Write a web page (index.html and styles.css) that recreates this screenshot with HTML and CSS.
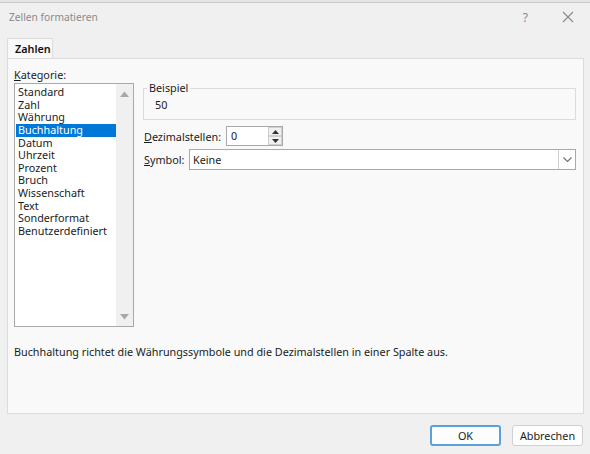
FILE: index.html
```html
<!DOCTYPE html>
<html lang="de">
<head>
<meta charset="utf-8">
<title>Zellen formatieren</title>
<link rel="stylesheet" href="styles.css">
</head>
<body>
<div class="window">
  <div class="strip"></div>
  <div class="titlebar">
    <span class="title">Zellen formatieren</span>
    <span class="help">?</span>
    <svg class="close" width="12" height="12" viewBox="0 0 12 12"><path d="M1 1L11 11M11 1L1 11" stroke="#8a8a8a" stroke-width="1.1" fill="none"/></svg>
  </div>
  <div class="tabs">
    <div class="tab">Zahlen</div>
  </div>
  <div class="panel">
    <div class="main">
      <div class="left">
        <div class="label"><u>K</u>ategorie:</div>
        <div class="listbox">
          <ul class="items">
            <li>Standard</li>
            <li>Zahl</li>
            <li>Währung</li>
            <li class="selected">Buchhaltung</li>
            <li>Datum</li>
            <li>Uhrzeit</li>
            <li>Prozent</li>
            <li>Bruch</li>
            <li>Wissenschaft</li>
            <li>Text</li>
            <li>Sonderformat</li>
            <li>Benutzerdefiniert</li>
          </ul>
          <div class="scrollbar">
            <svg width="9" height="6" viewBox="0 0 9 6"><path d="M0 6L4.5 0.5L9 6Z" fill="#a8a8a8"/></svg>
            <svg width="9" height="6" viewBox="0 0 9 6"><path d="M0 0L4.5 5.5L9 0Z" fill="#a8a8a8"/></svg>
          </div>
        </div>
      </div>
      <div class="right">
        <fieldset class="sample">
          <legend>Beispiel</legend>
          <div class="sample-value">50</div>
        </fieldset>
        <div class="row decimals">
          <span class="field-label"><u>D</u>ezimalstellen:</span>
          <div class="spinner">
            <span class="spin-value">0</span>
            <div class="spin-buttons">
              <div class="spin-btn"><svg width="7" height="4" viewBox="0 0 7 4"><path d="M0 4L3.5 0L7 4Z" fill="#333"/></svg></div>
              <div class="spin-btn"><svg width="7" height="4" viewBox="0 0 7 4"><path d="M0 0L3.5 4L7 0Z" fill="#333"/></svg></div>
            </div>
          </div>
        </div>
        <div class="row symbol">
          <span class="field-label"><u>S</u>ymbol:</span>
          <div class="select">
            <span class="select-value">Keine</span>
            <div class="select-btn"><svg width="9" height="5" viewBox="0 0 9 5"><path d="M0.5 0.5L4.5 4.5L8.5 0.5" stroke="#707070" stroke-width="1.1" fill="none"/></svg></div>
          </div>
        </div>
      </div>
    </div>
    <p class="description">Buchhaltung richtet die Währungssymbole und die Dezimalstellen in einer Spalte aus.</p>
  </div>
  <div class="footer">
    <button class="btn btn-primary">OK</button>
    <button class="btn">Abbrechen</button>
  </div>
</div>
</body>
</html>
```
FILE: styles.css
```css
* { box-sizing: border-box; }
html, body { margin: 0; padding: 0; }
body {
  width: 590px;
  height: 454px;
  overflow: hidden;
  background: #f0f0f0;
  font-family: "Noto Sans", "Open Sans", sans-serif;
  font-size: 10.8px;
  color: #1b1b1b;
}
.window {
  display: flex;
  flex-direction: column;
  height: 454px;
}
.strip {
  height: 3px;
  background: #e4e4e4;
  border-bottom: 1px solid #c8c8c8;
}
.titlebar {
  height: 28px;
  display: flex;
  align-items: center;
  padding-left: 9px;
  padding-right: 16px;
}
.title {
  flex: 1;
  color: #8a8a8a;
  font-size: 10.2px;
}
.help {
  color: #8a8a8a;
  font-size: 12px;
  margin-right: 34px;
}
.close { display: block; }
.tabs {
  display: flex;
  padding-left: 7px;
  margin-top: 7px;
}
.tab {
  width: 46px;
  height: 20px;
  background: #f9f9f9;
  border: 1px solid #dcdcdc;
  border-bottom: none;
  padding-left: 7px;
  line-height: 19px;
  font-weight: 600;
  color: #111;
}
.panel {
  margin: 0 6px 0 7px;
  height: 356px;
  background: #f9f9f9;
  border: 1px solid #dcdcdc;
  padding: 8px 7px 0 6px;
}
.main {
  display: grid;
  grid-template-columns: 120px 1fr;
  column-gap: 9px;
}
.label { line-height: 15px; }
.listbox {
  margin-top: 1px;
  height: 244px;
  background: #fff;
  border: 1px solid #a9a9a9;
  display: flex;
}
.items {
  list-style: none;
  margin: 0;
  padding: 2px 0 0 1px;
  flex: 1;
}
.items li {
  height: 12.65px;
  line-height: 12.65px;
  padding-left: 2px;
  white-space: nowrap;
}
.items li.selected {
  background: #0078d7;
  color: #fff;
}
.scrollbar {
  width: 17px;
  background: #f0f0f0;
  display: flex;
  flex-direction: column;
  justify-content: space-between;
  align-items: center;
  padding: 7px 0 6px;
}
.scrollbar svg { display: block; }
.right {
  display: flex;
  flex-direction: column;
  padding-top: 16px;
}
.sample {
  margin: 0;
  padding: 0 0 0 11px;
  height: 37px;
  border: 1px solid #dcdcdc;
}
.sample legend {
  padding: 0 2px;
  margin-left: -8px;
  line-height: 10px;
}
.sample-value { margin-top: 5px; line-height: 14px; }
.row {
  display: flex;
  align-items: center;
}
.decimals { margin-top: 6px; }
.symbol { margin-top: 3px; }
.field-label { padding-left: 1px; }
.decimals .field-label { width: 83px; }
.symbol .field-label { width: 46px; }
.spinner {
  width: 57px;
  height: 20px;
  display: flex;
  background: #fff;
  border: 1px solid #a9a9a9;
}
.spin-value {
  flex: 1;
  padding-left: 4px;
  line-height: 18px;
}
.spin-buttons {
  width: 14px;
  display: flex;
  flex-direction: column;
}
.spin-btn {
  flex: 1;
  display: flex;
  align-items: center;
  justify-content: center;
  background: #f0f0f0;
  border: 1px solid #cfcfcf;
}
.spin-btn svg { display: block; }
.select {
  flex: 1;
  height: 21px;
  display: flex;
  background: #fff;
  border: 1px solid #a9a9a9;
}
.select-value {
  flex: 1;
  padding-left: 3px;
  line-height: 19px;
}
.select-btn {
  width: 17px;
  display: flex;
  align-items: center;
  justify-content: center;
  border-left: 1px solid #cfcfcf;
}
.select-btn svg { display: block; }
.description {
  margin: 17px 0 0 0;
  line-height: 15px;
}
.footer {
  display: flex;
  justify-content: flex-end;
  gap: 11px;
  padding: 11px 7px 0 0;
}
.btn {
  width: 71px;
  height: 21px;
  font-family: inherit;
  font-size: 10.8px;
  color: #1b1b1b;
  background: #fdfdfd;
  border: 1px solid #d0d0d0;
  border-radius: 3px;
  padding: 0;
}
.btn-primary {
  border: 2px solid #5aa0dc;
}
```
